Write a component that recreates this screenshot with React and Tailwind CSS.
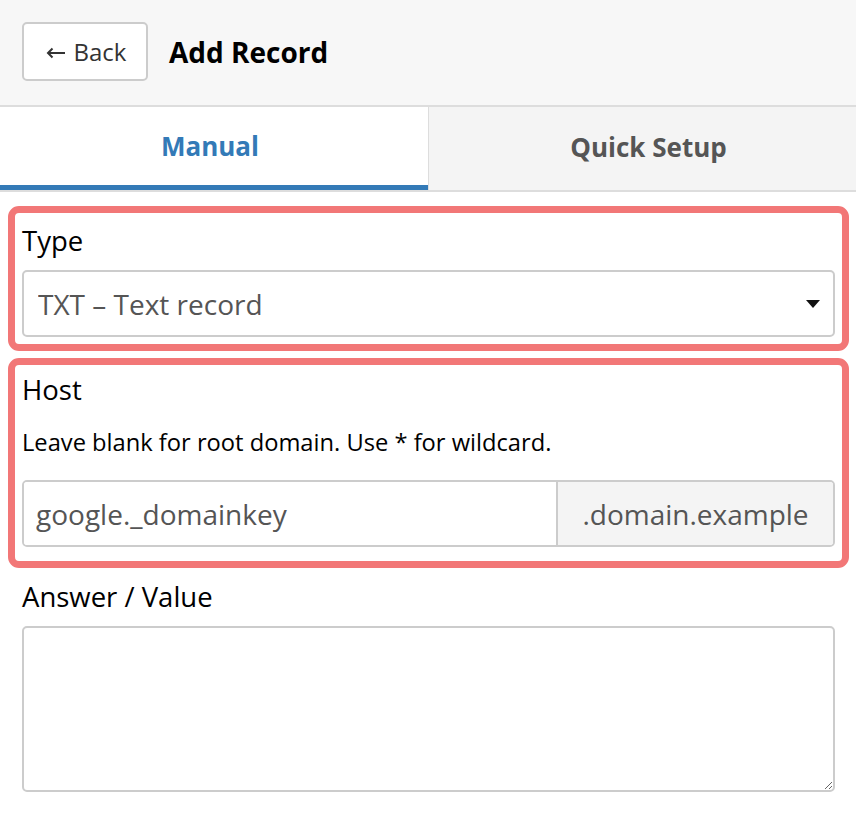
import { useState } from 'react';

export default function App() {
  const [tab, setTab] = useState('manual');

  return (
    <div className="min-h-[824px] bg-white text-black" style={{ fontFamily: '"Open Sans", "Noto Sans", sans-serif' }}>
      {/* Header */}
      <div className="flex items-center gap-[21px] h-[107px] px-[22px] pb-[2px] bg-[#f7f7f7] border-b-2 border-[#dddddd]">
        <button type="button" className="h-[59px] w-[126px] rounded-[5px] border-2 border-[#cccccc] bg-white text-[24px] text-[#333333] flex items-center justify-center gap-[9px] pl-[2px]">
          <svg width="19" height="12" viewBox="0 0 19 12" className="mt-[2px]">
            <path d="M19 6H2M6.5 1.5L2 6l4.5 4.5" fill="none" stroke="#333" strokeWidth="2" />
          </svg>
          <span>Back</span>
        </button>
        <h1 className="text-[28px] font-bold">Add Record</h1>
      </div>

      {/* Tabs */}
      <div className="flex h-[85px] border-b-2 border-[#dddddd]">
        <button type="button" onClick={() => setTab('manual')}
          className={`w-1/2 shrink-0 text-[26px] font-bold border-b-[5px] pr-[8px] ${tab === 'manual' ? 'bg-white text-[#337ab7] border-[#337ab7]' : 'bg-[#f4f4f4] text-[#555555] border-transparent'}`}>
          Manual
        </button>
        <button type="button" onClick={() => setTab('quick')}
          className={`w-1/2 shrink-0 text-[26px] font-bold border-l border-[#dddddd] pb-[3px] pl-[12px] ${tab === 'quick' ? 'bg-white text-[#337ab7]' : 'bg-[#f4f4f4] text-[#555555]'}`}>
          Quick Setup
        </button>
      </div>

      <div className="pl-[8px] pr-[7px] pt-[14px]">
        {/* Type */}
        <div className="rounded-[11px] border-[7px] border-[#f27777] px-[7px] pt-[10px] pb-[7px]">
          <label className="block text-[27.5px] leading-[36px]">Type</label>
          <div className="relative mt-[11px]">
            <select className="appearance-none w-full h-[67px] rounded-[5px] border-2 border-[#cccccc] bg-white pl-[14px] text-[28px] text-[#555555] outline-none">
              <option>TXT – Text record</option>
            </select>
            <svg className="absolute right-[15px] top-[30px] pointer-events-none" width="14" height="8" viewBox="0 0 14 8">
              <path d="M0 0h14L7 8z" fill="#111" />
            </svg>
          </div>
        </div>

        {/* Host */}
        <div className="mt-[7px] rounded-[11px] border-[7px] border-[#f27777] px-[7px] pt-[7px] pb-[14px]">
          <label className="block text-[27.5px] leading-[36px]">Host</label>
          <p className="mt-[21px] text-[23.7px] leading-[26px]">Leave blank for root domain. Use * for wildcard.</p>
          <div className="mt-[25px] flex h-[67px] rounded-[5px] border-2 border-[#cccccc] overflow-hidden">
            <input defaultValue="google._domainkey" className="flex-1 min-w-0 pl-[12px] text-[28px] text-[#555555] outline-none bg-white" />
            <span className="w-[277px] flex items-center justify-center border-l-2 border-[#cccccc] bg-[#f4f4f4] text-[28px] text-[#555555]">.domain.example</span>
          </div>
        </div>

        {/* Answer */}
        <div className="px-[14px] pt-[11px]">
          <label className="block text-[27.5px] leading-[36px]">Answer / Value</label>
          <textarea className="mt-[11px] block w-full h-[166px] rounded-[5px] border-2 border-[#cccccc] outline-none" />
        </div>
      </div>
    </div>
  );
}
